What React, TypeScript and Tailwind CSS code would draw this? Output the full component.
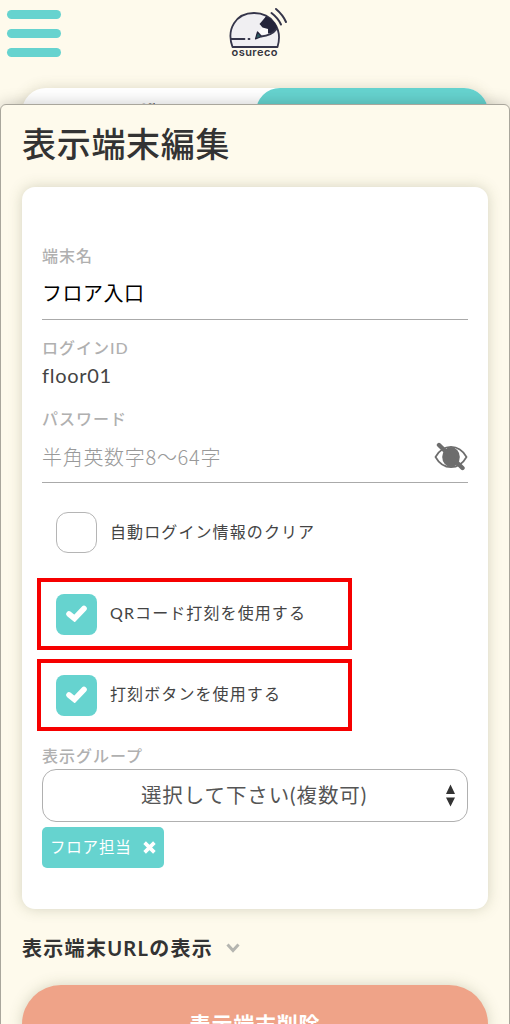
import { useState } from "react";

const FONT = "font-['Lato','Noto_Sans_CJK_JP',sans-serif]";

function Logo() {
  return (
    <svg className="h-[60px] w-[64px]" viewBox="0 0 64 60">
      <path d="M7.500 47 C1 29 11 13 29 13 C47 13 58 29 52.500 47 Z" fill="#f0eff2" stroke="#35354a" strokeWidth="1.800" strokeLinejoin="round" />
      <path d="M41 16.500 L37 23 L42.500 29 L43 33.500 C47 33.500 50 32 52.500 29 C51 23 47 19 41 16.500 Z" fill="#24243a" />
      <path d="M37 21.500 L34.500 25 L37 28 L33 31.500 L37.500 34.500 L43 33.500 L43 29 Z" fill="#fbfafb" />
      <path d="M41 16.500 L34.500 24 L37.500 27.500 L43 29 Z" fill="#24243a" />
      <path d="M32.500 32 L30.500 39 L36.500 36.500 Z" fill="#2b5a60" stroke="#24243a" strokeWidth="1.200" strokeLinejoin="round" />
      <path d="M6 39 H19.500 M23.500 39 H24.500 M36 36.500 C42 36 48 34 51.500 29" fill="none" stroke="#35354a" strokeWidth="1.800" strokeLinecap="round" />
      <path d="M46.500 13 Q53 18 56 24.500 M51 9 Q58 15 61 22" fill="none" stroke="#35354a" strokeWidth="2" strokeLinecap="round" />
      <text x="6.500" y="56" fontSize="11" fontWeight="600" fill="#35353f" textLength="46" fontFamily="Inter, sans-serif">osureco</text>
    </svg>
  );
}

function Header() {
  return (
    <header className="flex h-[88px] items-start">
      <button className="ml-[7px] mt-[10px] flex w-[54px] flex-col gap-[10.500px]" aria-label="メニュー">
        <span className="h-[8.500px] rounded-full bg-[#66d3cf]" />
        <span className="h-[8.500px] rounded-full bg-[#66d3cf]" />
        <span className="h-[8.500px] rounded-full bg-[#66d3cf]" />
      </button>
      <div className="ml-[164px]">
        <Logo />
      </div>
    </header>
  );
}

function EyeOff() {
  return (
    <svg className="h-[30px] w-[34px]" viewBox="0 0 34 30">
      <path d="M1.500 15 C9 1.500 25 1.500 32.500 15 C25 28.500 9 28.500 1.500 15 Z" fill="none" stroke="#6d6d6d" strokeWidth="1.700" />
      <ellipse cx="17" cy="15" rx="8.800" ry="10" fill="#6d6d6d" />
      <path d="M5 3 L28.500 26" stroke="#6d6d6d" strokeWidth="4.400" strokeLinecap="round" />
    </svg>
  );
}

type CheckRowProps = {
  label: string;
  checked: boolean;
  onChange: () => void;
};

function CheckRow({ label, checked, onChange }: CheckRowProps) {
  return (
    <button type="button" role="checkbox" aria-checked={checked} onClick={onChange} className="flex items-center">
      <span
        className={
          checked
            ? "flex h-[41px] w-[41px] items-center justify-center rounded-[8px] bg-[#66d3cf]"
            : "flex h-[41px] w-[41px] items-center justify-center rounded-[12px] border border-[#b5b5b5] bg-white"
        }
      >
        {checked && (
          <svg className="-mt-[2px] h-[17px] w-[21px]" viewBox="0 0 21 17">
            <path d="M3 9 L8.500 13.500 L18 3.500" fill="none" stroke="#fff" strokeWidth="5.600" strokeLinecap="round" />
          </svg>
        )}
      </span>
      <span className="-mt-[2px] ml-[13px] whitespace-nowrap text-[16px] leading-6 tracking-[1.1px] text-[#444]">{label}</span>
    </button>
  );
}

export default function App() {
  const [clearLogin, setClearLogin] = useState(false);
  const [useQr, setUseQr] = useState(true);
  const [useButton, setUseButton] = useState(true);

  return (
    <div className={`relative h-[1024px] w-[510px] overflow-hidden bg-[#fefaec] ${FONT}`}>
      <Header />
      <div className="mx-[22px] flex h-12 rounded-[26px] bg-white text-[17px] font-bold shadow-[0_0_14px_rgba(90,90,50,0.2)]">
        <div className="flex w-[234px] justify-center pt-[10px] tracking-[1px] text-[#333]">ユーザー</div>
        <div className="flex flex-1 justify-center rounded-[26px] bg-[#66d3cf] pt-[12px] tracking-[1px] text-white">表示端末</div>
      </div>

      {/* 編集モーダル */}
      <main className="absolute inset-x-0 top-[104px] h-[960px] rounded-t-[6px] border border-[#a9a69c] bg-[#fefaec] px-[21px] shadow-[0_0_16px_rgba(0,0,0,0.22)]">
        <h1 className="mt-[14px] h-[52px] whitespace-nowrap text-[34px] font-medium leading-[50px] tracking-[0.7px] text-[#333]">表示端末編集</h1>

        <section className="mt-4 h-[722px] rounded-[13px] bg-white px-5 pt-[57px] shadow-[0_0_14px_rgba(90,100,60,0.25)]">
          <div className="h-6 text-[16px] font-medium leading-6 tracking-[1px] text-[#b0b0b0]">端末名</div>
          <div className="h-[52px] border-b border-[#aaa] pt-[10px] text-[20px] leading-[30px] tracking-[0.5px] text-black">フロア入口</div>

          <div className="mt-4 h-6 text-[16px] font-medium leading-6 tracking-[1px] text-[#b0b0b0]">ログインID</div>
          <div className="h-8 text-[20px] leading-[30px] tracking-[0.7px] text-[#444]">floor01</div>

          <div className="mt-[15px] h-6 text-[16px] font-medium leading-6 tracking-[1px] text-[#b0b0b0]">パスワード</div>
          <div className="flex h-[52px] items-center justify-between border-b border-[#aaa]">
            <span className="font-['Noto_Sans_CJK_JP',sans-serif] text-[20px] font-light tracking-[0.7px] text-[#999]">半角英数字8〜64字</span>
            <EyeOff />
          </div>

          <div className="ml-[14px] mt-[29px]">
            <CheckRow label="自動ログイン情報のクリア" checked={clearLogin} onChange={() => setClearLogin(!clearLogin)} />
          </div>
          <div className="-ml-[5px] mt-[25px] flex h-[72px] w-[315px] items-center border-4 border-[#f60000] pl-[15px]">
            <CheckRow label="QRコード打刻を使用する" checked={useQr} onChange={() => setUseQr(!useQr)} />
          </div>
          <div className="-ml-[5px] mt-[9px] flex h-[72px] w-[315px] items-center border-4 border-[#f60000] pl-[15px]">
            <CheckRow label="打刻ボタンを使用する" checked={useButton} onChange={() => setUseButton(!useButton)} />
          </div>

          <div className="mt-[13px] h-6 text-[16px] font-medium leading-6 tracking-[1px] text-[#b0b0b0]">表示グループ</div>
          <div className="mt-px flex h-[53px] items-center rounded-[14px] border border-[#b0b0b0] pr-3">
            <span className="flex-1 pl-[19px] text-center text-[20.500px] tracking-[0.900px] text-[#555]">選択して下さい(複数可)</span>
            <svg className="h-6 w-[9px]" viewBox="0 0 9 24" fill="#333">
              <path d="M4.500 0.500 L9 10 H0 Z M0 13.500 H9 L4.500 22.500 Z" />
            </svg>
          </div>
          <div className="mt-[5px] flex h-[41px] w-[122px] items-center rounded-[5px] bg-[#66d3cf] pl-[8px] text-white">
            <span className="whitespace-nowrap text-[15.500px] tracking-[0.8px]">フロア担当</span>
            <svg className="ml-[11px] h-[13px] w-[13px]" viewBox="0 0 12 12">
              <path d="M1.500 1.500 L10.500 10.500 M10.500 1.500 L1.500 10.500" stroke="#fff" strokeWidth="3.400" />
            </svg>
          </div>
        </section>

        <div className="mt-6 flex h-[30px] items-center">
          <span className="whitespace-nowrap text-[20px] font-bold leading-[30px] tracking-[1.300px] text-[#333]">表示端末URLの表示</span>
          <svg className="ml-[13px] h-[10px] w-[14px]" viewBox="0 0 14 10">
            <path d="M1.500 1.500 L7 7.500 L12.500 1.500" fill="none" stroke="#b5b5b0" strokeWidth="3" />
          </svg>
        </div>

        <button className="mt-[22px] flex h-[78px] w-full justify-center rounded-[39px] bg-[#efa388] pt-[24px] text-[21px] font-bold leading-[30px] tracking-[0.8px] text-white shadow-[0_0_14px_rgba(90,100,60,0.25)]">
          表示端末削除
        </button>
      </main>
    </div>
  );
}
